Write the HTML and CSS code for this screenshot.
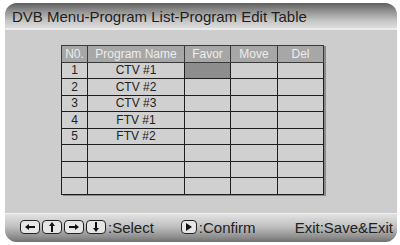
FILE: index.html
```html
<!DOCTYPE html>
<html>
<head>
<meta charset="utf-8">
<link rel="stylesheet" href="styles.css">
</head>
<body>
<div class="panel">
  <div class="titlebar">DVB Menu-Program List-Program Edit Table</div>
  <div class="content">
    <table class="grid">
      <colgroup>
        <col class="c-no"><col class="c-name"><col class="c-fav"><col class="c-move"><col class="c-del">
      </colgroup>
      <thead>
        <tr><th>N0.</th><th>Program Name</th><th>Favor</th><th>Move</th><th>Del</th></tr>
      </thead>
      <tbody>
        <tr><td>1</td><td>CTV #1</td><td class="sel"></td><td></td><td></td></tr>
        <tr><td>2</td><td>CTV #2</td><td></td><td></td><td></td></tr>
        <tr><td>3</td><td>CTV #3</td><td></td><td></td><td></td></tr>
        <tr><td>4</td><td>FTV #1</td><td></td><td></td><td></td></tr>
        <tr><td>5</td><td>FTV #2</td><td></td><td></td><td></td></tr>
        <tr><td></td><td></td><td></td><td></td><td></td></tr>
        <tr><td></td><td></td><td></td><td></td><td></td></tr>
        <tr><td></td><td></td><td></td><td></td><td></td></tr>
      </tbody>
    </table>
  </div>
  <div class="footer">
    <div class="group">
      <span class="key"><svg viewBox="0 0 10 8" width="10" height="8"><path d="M0 4 L4 1 L4 3 L10 3 L10 5 L4 5 L4 7 Z" fill="#111"/></svg></span>
      <span class="key"><svg viewBox="0 0 8 10" width="8" height="10"><path d="M4 0 L7 4 L5 4 L5 10 L3 10 L3 4 L1 4 Z" fill="#111"/></svg></span>
      <span class="key"><svg viewBox="0 0 10 8" width="10" height="8"><path d="M10 4 L6 1 L6 3 L0 3 L0 5 L6 5 L6 7 Z" fill="#111"/></svg></span>
      <span class="key"><svg viewBox="0 0 8 10" width="8" height="10"><path d="M4 10 L7 6 L5 6 L5 0 L3 0 L3 6 L1 6 Z" fill="#111"/></svg></span>
      <span class="label">:Select</span>
    </div>
    <div class="group confirm">
      <span class="key small"><svg viewBox="0 0 6 8" width="6" height="8"><path d="M0 0 L6 4 L0 8 Z" fill="#111"/></svg></span>
      <span class="label">:Confirm</span>
    </div>
    <div class="group exit">
      <span class="label">Exit:Save&amp;Exit</span>
    </div>
  </div>
</div>
</body>
</html>
```
FILE: styles.css
```css
html, body {
  margin: 0;
  padding: 0;
  background: #ffffff;
}
body {
  width: 400px;
  height: 245px;
  overflow: hidden;
  font-family: "Liberation Sans", Arial, sans-serif;
}
.panel {
  margin: 3px 3px 0 5px;
  width: 392px;
  height: 239px;
  border-radius: 12px;
  background: #cdcdcd;
  overflow: hidden;
  display: flex;
  flex-direction: column;
}
.titlebar {
  height: 27px;
  flex: none;
  box-sizing: border-box;
  padding: 5px 0 0 7px;
  font-size: 15px;
  color: #1e1e1e;
  background: linear-gradient(#5e5e5e 0%, #8e8e8e 30%, #c4c4c4 70%, #dedede 100%);
  border-bottom: 2px solid #ececec;
}
.content {
  flex: 1;
  padding: 15px 0 0 56px;
}
.grid {
  border-collapse: collapse;
  table-layout: fixed;
  width: 262px;
  box-shadow: 2px 1px 0 #8a8a8a;
}
.c-no { width: 26px; }
.c-name { width: 97px; }
.c-fav { width: 46px; }
.c-move { width: 47px; }
.c-del { width: 46px; }
.grid th, .grid td {
  border: 1.5px solid #1e1e1e;
  height: 15.5px;
  padding: 0;
  text-align: center;
  font-size: 12px;
  line-height: 14px;
  font-weight: normal;
}
.grid th {
  background: #a7a7a7;
  color: #ececec;
  border-color: #3a3a3a;
}
.grid td {
  color: #222;
  background: #d0d0d0;
}
.grid td.sel {
  background: #8d8d8d;
}
.footer {
  margin-top: auto;
  height: 29px;
  flex: none;
  box-sizing: border-box;
  border-top: 1px solid #f0f0f0;
  background: linear-gradient(#e2e2e2 0%, #c0c0c0 45%, #8a8a8a 85%, #6e6e6e 100%);
  display: flex;
  align-items: center;
  padding: 0 4px 2px 15px;
}
.group {
  display: flex;
  align-items: center;
  gap: 2px;
}
.confirm {
  margin-left: 27px;
}
.exit {
  margin-left: auto;
}
.key {
  width: 20px;
  height: 14px;
  box-sizing: border-box;
  border: 1.5px solid #222;
  border-radius: 4px;
  background: #e6e6e6;
  display: flex;
  align-items: center;
  justify-content: center;
}
.key.small {
  width: 16px;
}
.label {
  font-size: 15px;
  color: #222;
}
```
